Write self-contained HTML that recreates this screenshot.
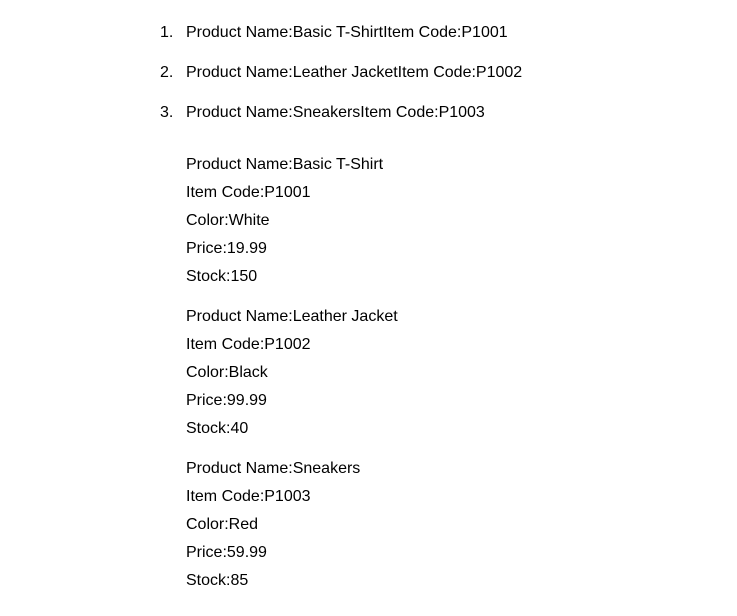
<!DOCTYPE html>
<html><head><style>
body{margin:0;width:737px;height:616px;background:#fff;font-family:"Liberation Sans",Arial,sans-serif;font-size:16px;color:#000;position:relative}
.t{position:absolute;left:186px;line-height:20px;white-space:nowrap}
.n{position:absolute;left:160px;line-height:20px}
</style></head><body>
<div class="n" style="top:23px">1.</div><div class="t" style="top:23px">Product Name:Basic T-ShirtItem Code:P1001</div>
<div class="n" style="top:63px">2.</div><div class="t" style="top:63px">Product Name:Leather JacketItem Code:P1002</div>
<div class="n" style="top:103px">3.</div><div class="t" style="top:103px">Product Name:SneakersItem Code:P1003</div>
<div class="t" style="top:155px">Product Name:Basic T-Shirt</div>
<div class="t" style="top:183px">Item Code:P1001</div>
<div class="t" style="top:211px">Color:White</div>
<div class="t" style="top:239px">Price:19.99</div>
<div class="t" style="top:267px">Stock:150</div>
<div class="t" style="top:307px">Product Name:Leather Jacket</div>
<div class="t" style="top:335px">Item Code:P1002</div>
<div class="t" style="top:363px">Color:Black</div>
<div class="t" style="top:391px">Price:99.99</div>
<div class="t" style="top:419px">Stock:40</div>
<div class="t" style="top:459px">Product Name:Sneakers</div>
<div class="t" style="top:487px">Item Code:P1003</div>
<div class="t" style="top:515px">Color:Red</div>
<div class="t" style="top:543px">Price:59.99</div>
<div class="t" style="top:571px">Stock:85</div>
</body></html>
